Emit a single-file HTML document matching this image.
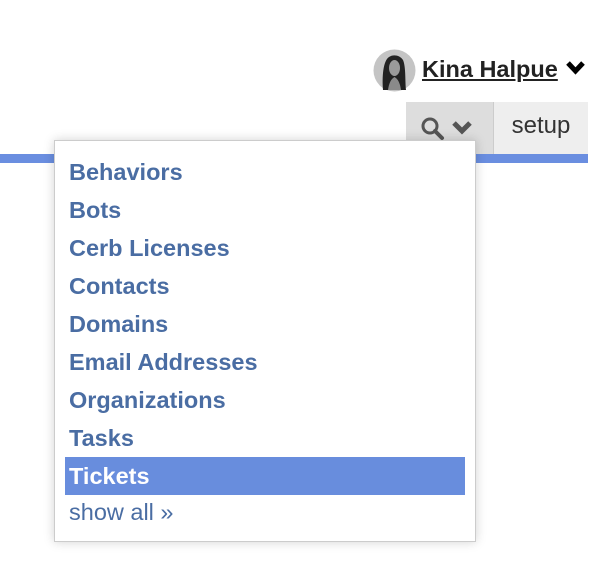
<!DOCTYPE html>
<html><head><style>
body{margin:0;width:598px;height:578px;background:#fff;position:relative;overflow:hidden;font-family:"Liberation Sans",Arial,sans-serif}
.bar{position:absolute;left:0;top:154px;width:588px;height:9px;background:#6a8ee0}
.sbtn{position:absolute;left:406px;top:102px;width:87px;height:52px;background:#ddd}
.setup{position:absolute;left:493px;top:102px;width:94px;height:52px;background:#eee;border-left:1px solid #ccc;font-size:24px;color:#333;text-align:center;line-height:48px}
.dd{position:absolute;left:54px;top:140px;width:420px;height:400px;background:#fff;border:1px solid #ccc;box-shadow:0 0 10px rgba(0,0,0,.18)}
.it{position:absolute;left:14px;font-size:23.5px;font-weight:bold;color:#4a6da3;line-height:38px}
.hl{position:absolute;left:10px;top:316px;width:400px;height:38px;background:#688ddd}
.name{position:absolute;left:422px;top:56px;font-size:23.5px;font-weight:bold;color:#222;text-decoration:underline}
</style></head><body>
<svg style="position:absolute;left:373px;top:49px" width="43" height="43" viewBox="0 0 43 43"><circle cx="21.5" cy="21.5" r="21" fill="#c4c4c4"/><path d="M10 41 C9 28 10 12 16 8 C20 5 27 6 30 11 C33 18 32 32 33 41 Z" fill="#222"/><path d="M15 41 C16 34 18 30 21.5 28 C25 30 27 34 28 41 Z" fill="#8a8a8a"/><ellipse cx="21.5" cy="19" rx="5.5" ry="8" fill="#9a9a9a"/></svg>
<div class="name">Kina Halpue</div>
<svg style="position:absolute;left:565px;top:60px" width="21" height="16" viewBox="0 0 21 16"><path d="M3 3 L10.5 11 L18 3" stroke="#000" stroke-width="5" fill="none"/></svg>
<div class="bar"></div>
<div class="sbtn">
<svg style="position:absolute;left:14px;top:14px" width="26" height="26" viewBox="0 0 26 26"><circle cx="10" cy="10" r="7" stroke="#555" stroke-width="3" fill="none"/><path d="M15 15 L22 22" stroke="#555" stroke-width="4" stroke-linecap="round"/></svg>
<svg style="position:absolute;left:45px;top:18px" width="22" height="16" viewBox="0 0 22 16"><path d="M3 3 L11 11 L19 3" stroke="#555" stroke-width="5" fill="none"/></svg>
</div>
<div class="setup">setup</div>
<div class="dd">
<div class="hl"></div>
<div class="it" style="top:12px">Behaviors</div>
<div class="it" style="top:50px">Bots</div>
<div class="it" style="top:88px">Cerb Licenses</div>
<div class="it" style="top:126px">Contacts</div>
<div class="it" style="top:164px">Domains</div>
<div class="it" style="top:202px">Email Addresses</div>
<div class="it" style="top:240px">Organizations</div>
<div class="it" style="top:278px">Tasks</div>
<div class="it" style="top:316px;color:#fff">Tickets</div>
<div class="it" style="top:352px;font-weight:normal">show all »</div>
</div>
</body></html>
